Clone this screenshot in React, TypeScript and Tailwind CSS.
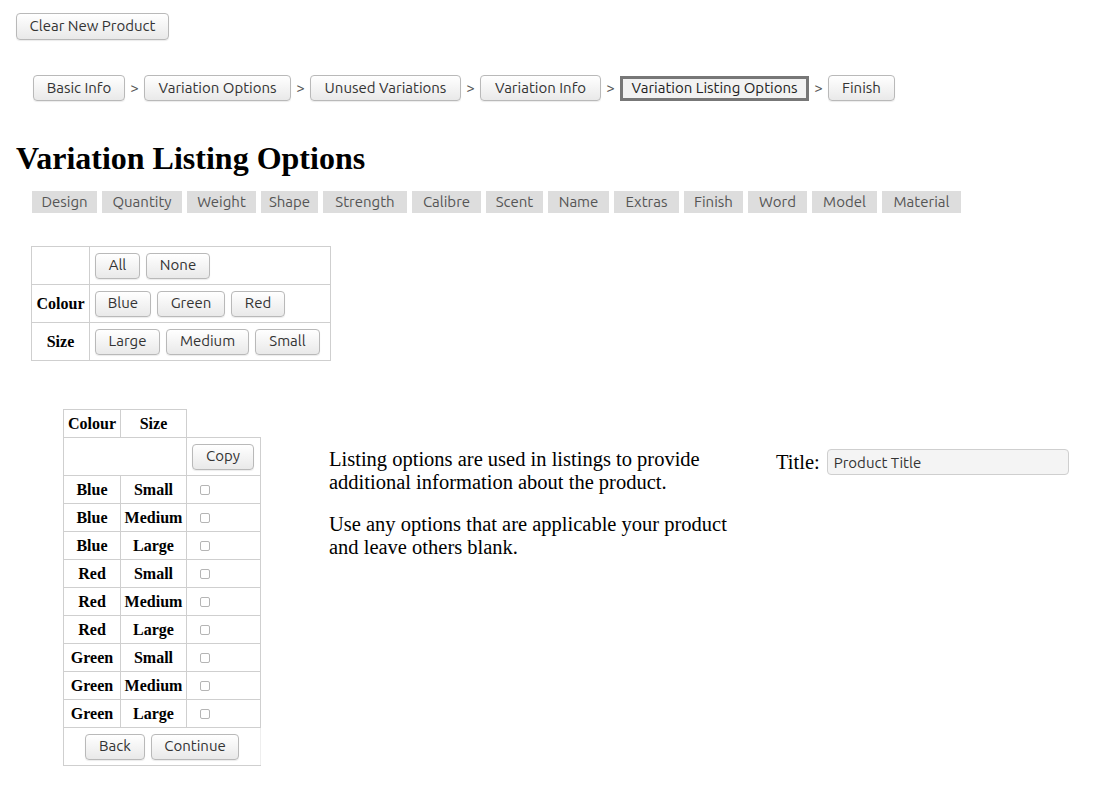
import React from 'react';

const ui = "font-['Ubuntu','Open_Sans','Noto_Sans',sans-serif]";
const serif = "font-['Liberation_Serif','Times_New_Roman',serif]";

const btn =
  `${ui} h-[26px] rounded-[4px] border border-[#b9b9b9] bg-gradient-to-b from-white to-[#e9e9e9] text-[15px] font-normal text-[#333] shadow-[0_1px_1px_rgba(0,0,0,0.08)] flex items-center justify-center`;

const crumbs = [
  { label: 'Basic Info', w: 'w-[92px]' },
  { label: 'Variation Options', w: 'w-[147px]' },
  { label: 'Unused Variations', w: 'w-[151px]' },
  { label: 'Variation Info', w: 'w-[121px]' },
  { label: 'Variation Listing Options', w: 'w-[189px]', active: true },
  { label: 'Finish', w: 'w-[67px]' },
];

const tabs = [
  { label: 'Design', w: 'w-[65px]' },
  { label: 'Quantity', w: 'w-[80px]' },
  { label: 'Weight', w: 'w-[69px]' },
  { label: 'Shape', w: 'w-[57px]' },
  { label: 'Strength', w: 'w-[84px]' },
  { label: 'Calibre', w: 'w-[69px]' },
  { label: 'Scent', w: 'w-[57px]' },
  { label: 'Name', w: 'w-[61px]' },
  { label: 'Extras', w: 'w-[65px]' },
  { label: 'Finish', w: 'w-[59px]' },
  { label: 'Word', w: 'w-[59px]' },
  { label: 'Model', w: 'w-[65px]' },
  { label: 'Material', w: 'w-[79px]' },
];

const combos: [string, string][] = [
  ['Blue', 'Small'],
  ['Blue', 'Medium'],
  ['Blue', 'Large'],
  ['Red', 'Small'],
  ['Red', 'Medium'],
  ['Red', 'Large'],
  ['Green', 'Small'],
  ['Green', 'Medium'],
  ['Green', 'Large'],
];

const cell = 'border border-[#cfcfcf]';

function Btn({ label, w }: { label: string; w: string }) {
  return <button className={`${btn} ${w}`}>{label}</button>;
}

export default function App() {
  return (
    <div className="min-h-screen bg-white text-black">
      <div className="pl-4 pt-[13px]">
        <Btn label="Clear New Product" w="w-[153px] h-[27px]" />
      </div>

      {/* wizard steps */}
      <div className="flex items-center pl-[33px] mt-[35px]">
        {crumbs.map((c, i) => (
          <React.Fragment key={c.label}>
            {c.active ? (
              <div
                className={`${ui} ${c.w} h-[25px] border-[3px] border-[#777] bg-[#f2f2f2] text-[15px] text-[#222] flex items-center justify-center`}
              >
                {c.label}
              </div>
            ) : (
              <button className={`${btn} ${c.w} h-[25px] text-[#222]`}>{c.label}</button>
            )}
            {i < crumbs.length - 1 && (
              <span className={`${ui} w-[19px] text-center text-[15px] text-[#555]`}>&gt;</span>
            )}
          </React.Fragment>
        ))}
      </div>

      <h1 className={`${serif} font-bold text-[32px] leading-[37px] pl-4 mt-[39px]`}>
        Variation Listing Options
      </h1>

      {/* option tabs */}
      <div className="flex gap-[5px] pl-8 mt-[14px]">
        {tabs.map((t) => (
          <div
            key={t.label}
            className={`${ui} ${t.w} h-[22px] bg-[#dddddd] text-[15px] text-[#555] flex items-center justify-center`}
          >
            {t.label}
          </div>
        ))}
      </div>

      {/* selection table */}
      <table className={`${serif} border-collapse ml-[31px] mt-[33px]`}>
        <tbody>
          <tr className="h-[38px]">
            <td className={`${cell} w-[58px]`}></td>
            <td className={`${cell} w-[241px] px-[5px]`}>
              <div className="flex gap-[6px]">
                <Btn label="All" w="w-[45px]" />
                <Btn label="None" w="w-[64px]" />
              </div>
            </td>
          </tr>
          <tr className="h-[38px]">
            <td className={`${cell} text-center font-bold text-[16px]`}>Colour</td>
            <td className={`${cell} px-[5px]`}>
              <div className="flex gap-[6px]">
                <Btn label="Blue" w="w-[56px]" />
                <Btn label="Green" w="w-[68px]" />
                <Btn label="Red" w="w-[54px]" />
              </div>
            </td>
          </tr>
          <tr className="h-[38px]">
            <td className={`${cell} text-center font-bold text-[16px]`}>Size</td>
            <td className={`${cell} px-[5px]`}>
              <div className="flex gap-[6px]">
                <Btn label="Large" w="w-[65px]" />
                <Btn label="Medium" w="w-[83px]" />
                <Btn label="Small" w="w-[65px]" />
              </div>
            </td>
          </tr>
        </tbody>
      </table>

      <div className="flex items-start mt-[48px]">
        {/* combinations table */}
        <table className={`${serif} border-collapse ml-[63px] text-[16px] font-bold`}>
          <tbody>
            <tr className="h-[28px]">
              <td className={`${cell} w-[57px] text-center`}>Colour</td>
              <td className={`${cell} w-[66px] text-center`}>Size</td>
              <td className="w-[74px] border-b border-[#cfcfcf]"></td>
            </tr>
            <tr className="h-[38px]">
              <td className={cell} colSpan={2}></td>
              <td className={`${cell} px-[5px]`}>
                <Btn label="Copy" w="w-[62px]" />
              </td>
            </tr>
            {combos.map(([c, s]) => (
              <tr key={c + s} className="h-[28px]">
                <td className={`${cell} text-center`}>{c}</td>
                <td className={`${cell} text-center`}>{s}</td>
                <td className={`${cell} pl-[13px]`}>
                  <div className="w-[10px] h-[10px] rounded-[2px] border border-[#b5b5b5] bg-white" />
                </td>
              </tr>
            ))}
            <tr className="h-[38px]">
              <td className={`${cell} border-r-[#eeeeee]`} colSpan={3}>
                <div className="flex justify-center gap-[6px]">
                  <Btn label="Back" w="w-[60px]" />
                  <Btn label="Continue" w="w-[88px]" />
                </div>
              </td>
            </tr>
          </tbody>
        </table>

        {/* help text */}
        <div className={`${serif} ml-[68px] mt-[39px] w-[430px] text-[20.5px] leading-[23px]`}>
          <p>
            Listing options are used in listings to provide
            <br />
            additional information about the product.
          </p>
          <p className="mt-[19px]">
            Use any options that are applicable your product
            <br />
            and leave others blank.
          </p>
        </div>

        {/* title field */}
        <div className="flex items-center ml-[17px] mt-[38px]">
          <span className={`${serif} text-[20.5px] mr-[7px]`}>Title:</span>
          <input
            readOnly
            value="Product Title"
            className={`${ui} w-[242px] h-[26px] rounded-[4px] border border-[#cfcfcf] bg-[#f4f4f4] px-[6px] text-[15px] text-[#333] outline-none`}
          />
        </div>
      </div>
    </div>
  );
}
